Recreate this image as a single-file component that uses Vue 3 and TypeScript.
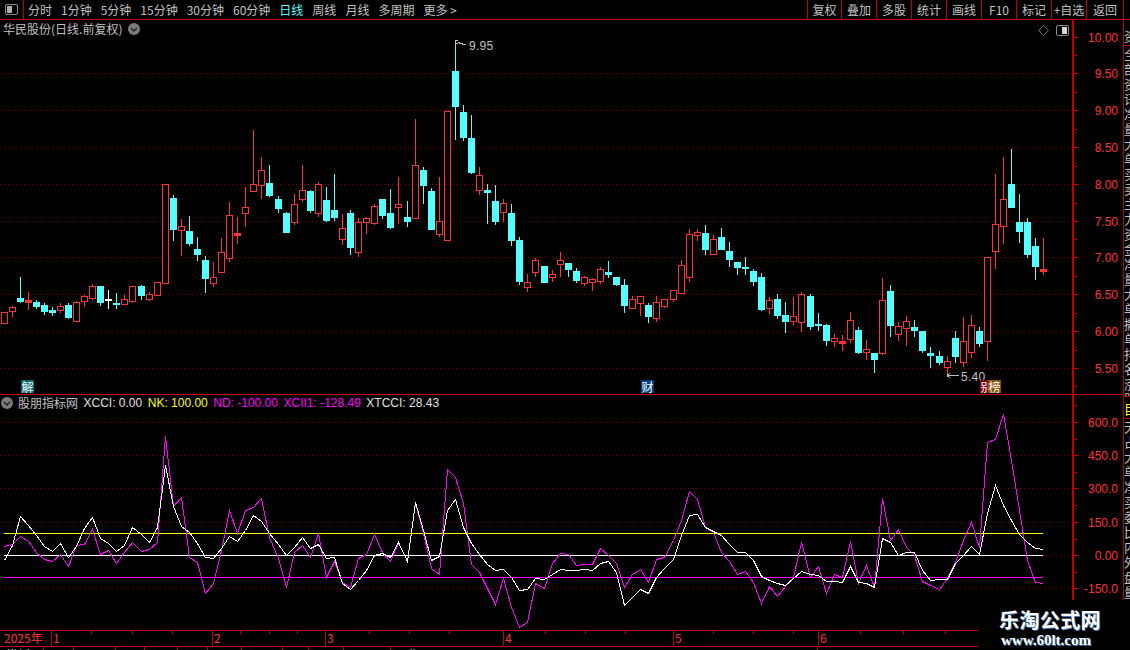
<script setup lang="ts">
type Candle = [string, number, number, number, number]

const navItems = ['分时', '1分钟', '5分钟', '15分钟', '30分钟', '60分钟', '日线', '周线', '月线', '多周期', '更多 >']
const toolItems = ['复权', '叠加', '多股', '统计', '画线', 'F10', '标记', '+自选', '返回']

// kind, high, body top, body bottom, low (in page pixels)
const raw: Candle[] = [
  ['r',312,312,323,323],['r',306,307,311,316],['c',277,298,301,302],['r',292,300,302,309],['c',300,302,306,308],
  ['c',303,305,311,314],['c',307,310,312,315],['r',303,306,310,312],['c',303,305,317,318],['r',301,302,321,321],
  ['r',295,296,301,306],['r',284,286,298,299],['c',286,286,302,305],['w',290,299,300,308],['c',293,303,304,308],
  ['r',295,299,304,304],['r',286,286,301,302],['c',285,286,295,299],['r',292,294,299,300],['r',282,282,295,295],
  ['r',184,184,283,283],['c',195,198,229,240],['r',219,226,230,255],['c',216,231,243,245],['c',237,249,254,260],
  ['c',256,260,278,292],['r',262,277,283,286],['r',238,252,272,272],['r',202,215,258,261],['r',217,233,235,243],
  ['r',187,207,213,226],['r',130,184,191,191],['r',157,170,185,198],['c',165,183,195,196],['c',196,199,208,212],
  ['c',212,213,232,232],['r',194,204,222,224],['r',165,190,199,201],['c',190,191,210,212],['r',182,184,213,216],
  ['c',187,200,220,221],['c',174,210,217,220],['r',214,228,239,244],['c',210,213,247,254],['r',218,222,252,256],
  ['r',217,218,222,233],['r',204,206,223,224],['c',199,199,215,218],['c',189,213,227,228],['r',177,204,207,223],
  ['c',201,217,221,226],['r',119,165,218,218],['c',167,170,185,203],['c',188,191,229,229],['r',177,221,234,236],
  ['r',111,111,240,240],['c',40,71,106,139],['c',105,112,137,140],['c',115,138,172,173],['r',167,175,190,194],
  ['c',184,190,192,223],['c',185,201,221,224],['r',199,203,212,221],['c',204,213,240,245],['c',237,240,281,284],
  ['r',274,282,287,291],['r',258,260,272,276],['c',266,266,282,282],['r',270,274,277,281],['r',252,260,264,276],
  ['c',263,263,269,276],['c',268,271,280,282],['r',276,277,283,285],['r',278,279,282,290],['r',267,269,281,283],
  ['c',261,272,274,277],['c',277,277,284,285],['c',279,285,305,312],['r',296,299,308,308],['r',296,296,303,315],
  ['c',303,305,316,322],['r',296,302,318,321],['r',299,299,306,307],['r',290,290,299,301],['r',260,265,293,293],
  ['r',229,234,277,281],['r',229,232,235,240],['c',225,233,249,254],['r',235,239,254,254],['c',228,237,249,249],
  ['c',242,251,259,266],['c',262,262,267,274],['c',257,267,268,274],['c',269,271,281,285],['c',273,277,309,310],
  ['r',297,300,308,313],['c',294,299,315,318],['c',302,315,321,332],['r',297,316,321,324],['r',292,294,322,331],
  ['c',294,296,326,329],['c',313,324,325,330],['c',324,325,340,345],['r',334,338,341,346],['r',335,341,343,350],
  ['r',312,320,339,342],['c',327,330,352,353],['r',340,349,352,359],['c',353,353,359,372],['r',278,300,353,354],
  ['c',285,291,325,336],['r',322,326,334,340],['r',316,321,328,345],['c',320,327,330,336],['c',331,331,350,352],
  ['c',347,353,355,367],['c',351,356,362,364],['r',356,361,367,375],['c',331,338,356,362],['r',317,341,362,366],
  ['r',315,325,352,357],['c',327,331,343,346],['r',257,257,341,360],['r',174,224,251,268],['r',157,199,226,243],
  ['c',149,184,207,207],['c',194,222,231,242],['c',218,222,254,257],['c',238,246,266,279],['r',238,269,271,274],
]

const candleX = (i: number) => Math.floor(4 + 8.0605 * i)

const candles = raw.map(([kind, hi, top, bot, lo], i) => {
  const x = candleX(i)
  const solid = kind !== 'r' || bot - top <= 2
  return {
    x,
    hi,
    lo,
    top,
    bot,
    solid,
    color: kind === 'r' ? '#ff3232' : kind === 'c' ? '#54ffff' : '#ffffff',
  }
})

const whiteZ = [
  480,435,349,375,405,438,454,430,472,437,385,352,415,428,453,435,382,403,425,380,195,318,378,397,430,
  472,475,444,408,423,390,345,363,400,433,465,440,412,445,432,475,472,548,567,540,510,465,460,472,427,
  483,305,390,480,467,330,298,380,428,462,492,510,508,530,570,568,535,538,522,508,509,510,508,511,490,
  483,515,615,590,567,578,530,505,478,405,345,342,382,393,405,432,456,456,480,527,540,550,555,535,514,
  522,526,543,543,547,498,545,550,560,415,425,465,455,455,510,541,538,537,490,465,438,463,340,256,315,
  360,403,425,443,448,
]
const magentaZ = [
  437,433,408,422,455,478,484,463,498,435,433,388,463,450,490,456,425,453,448,427,108,318,290,472,485,
  580,550,450,330,400,330,320,295,410,475,560,455,436,470,400,530,483,545,560,475,462,402,455,482,430,
  480,310,400,505,523,208,232,310,492,515,565,613,535,620,680,665,548,565,490,460,463,495,493,493,445,
  465,490,560,522,508,545,478,472,420,360,272,298,380,395,455,482,523,513,545,608,558,588,557,530,425,
  530,498,578,522,530,423,548,495,560,295,420,388,440,465,542,555,568,535,485,420,367,440,127,118,42,
  180,330,480,547,550,
]

const toLine = (z: number[]) =>
  z.map((v, i) => `${candleX(i)}.5,${Math.round(400 + v / 3)}.5`).join(' ')
const whiteLine = toLine(whiteZ)
const magentaLine = toLine(magentaZ)

const priceGrid = [73, 110, 147, 184, 221, 257, 294, 331, 368]
const indGrid = [422, 455, 488, 522, 555, 588]

const priceAxis = [
  { y: 37, label: '10.00' },
  { y: 73, label: '9.50' },
  { y: 110, label: '9.00' },
  { y: 147, label: '8.50' },
  { y: 184, label: '8.00' },
  { y: 221, label: '7.50' },
  { y: 257, label: '7.00' },
  { y: 294, label: '6.50' },
  { y: 331, label: '6.00' },
  { y: 368, label: '5.50' },
]
const priceMinor = [55, 92, 129, 166, 203, 239, 276, 313, 350, 386]
const indAxis = [
  { y: 422, label: '600.0' },
  { y: 455, label: '450.0' },
  { y: 488, label: '300.0' },
  { y: 522, label: '150.0' },
  { y: 555, label: '0.00' },
  { y: 588, label: '-150.0' },
]
const indMinor = [405, 439, 472, 505, 539, 572]

const months = [
  { x: 51, label: '1' },
  { x: 212, label: '2' },
  { x: 325, label: '3' },
  { x: 503, label: '4' },
  { x: 673, label: '5' },
  { x: 818, label: '6' },
]
const timeTicks = [91, 132, 172, 240, 269, 297, 369, 409, 449, 545, 585, 625, 713, 753, 793, 860, 903, 945]

const tabs = [
  { w: 44, label: '模板' }, { w: 30, label: '+' }, { w: 42, label: '' }, { w: 29, label: '' },
  { w: 33, label: '' }, { w: 30, label: '' }, { w: 34, label: '' }, { w: 41, label: '' },
  { w: 26, label: '' }, { w: 35, label: '' }, { w: 47, label: '' }, { w: 427, label: '周期' },
]

const stripTop = '全部资讯净量大单'
const stripMid = '买卖主力资金净量大单撒单排名涨跌幅度换手率量比振幅总手金额市盈率'
const stripBot = '天占大单净买委比内外盘量比资金涨跌换手总额振幅'
</script>

<template>
  <div class="app">
    <header class="topbar">
      <button class="panel-btn" type="button" aria-label="面板">
        <svg width="13" height="11" viewBox="0 0 13 11">
          <rect x="0.5" y="0.5" width="12" height="10" rx="1.5" fill="none" stroke="#8a8a8a" />
          <rect x="2" y="2" width="5" height="7" fill="#b0b0b0" />
        </svg>
      </button>
      <nav class="nav">
        <span v-for="item in navItems" :key="item" :class="{ active: item === '日线' }">{{ item }}</span>
      </nav>
      <div class="tools">
        <span v-for="item in toolItems" :key="item" class="tool">{{ item }}</span>
      </div>
    </header>

    <div class="body">
      <div class="charts">
        <section class="pane price">
          <svg class="plot" width="1072" height="374" viewBox="0 20 1072 374">
            <line
              v-for="y in priceGrid"
              :key="y"
              x1="0"
              x2="1072"
              :y1="y + 0.5"
              :y2="y + 0.5"
              class="dots"
            />
            <g v-for="c in candles" :key="c.x" shape-rendering="crispEdges">
              <rect :x="c.x" :y="c.hi" width="1" :height="c.lo - c.hi + 1" :fill="c.color" />
              <rect
                v-if="c.solid"
                :x="c.x - 3"
                :y="c.top"
                width="7"
                :height="c.bot - c.top + 1"
                :fill="c.color"
              />
              <rect
                v-else
                :x="c.x - 2.5"
                :y="c.top + 0.5"
                width="6"
                :height="c.bot - c.top"
                fill="#000"
                :stroke="c.color"
              />
            </g>
            <g shape-rendering="crispEdges" fill="none" stroke="#c0c0c0">
              <path d="M455.5 46V40.5H458M456 43.5H458" />
              <path d="M458 42.5L461 43.5L464 44.5H466" />
              <path d="M947 375.5H959M947 375.5L950 373M947 375.5L950 378" />
            </g>
            <text x="469" y="50" class="note">9.95</text>
            <text x="961" y="381" class="note">5.40</text>
          </svg>
          <svg class="axis" width="49" height="374" viewBox="1074 20 49 374">
            <g shape-rendering="crispEdges" fill="#c00000">
              <rect v-for="t in priceAxis" :key="t.y" x="1074" :y="t.y" width="5" height="1" />
              <rect v-for="y in priceMinor" :key="y" x="1074" :y="y" width="3" height="1" />
            </g>
            <text v-for="t in priceAxis" :key="t.label" x="1118" :y="t.y + 5" class="tick">{{ t.label }}</text>
          </svg>

          <div class="legend">
            <span class="name">华民股份(日线.前复权)</span>
            <svg class="chev" width="12" height="12" viewBox="0 0 12 12">
              <circle cx="6" cy="6" r="6" fill="#7a7a7a" />
              <path d="M3 5L6 8L9 5" fill="none" stroke="#1c1c1c" stroke-width="1.3" />
            </svg>
          </div>
          <div class="corner">
            <svg width="11" height="11" viewBox="0 0 11 11">
              <path d="M5.5 .5L10.5 5.5L5.5 10.5L.5 5.5Z" fill="none" stroke="#6e6e6e" />
            </svg>
            <svg width="13" height="11" viewBox="0 0 13 11">
              <rect x="0.5" y="0.5" width="12" height="10" rx="1.5" fill="none" stroke="#8a8a8a" />
              <rect x="6" y="2" width="5" height="7" fill="#d8d8d8" />
            </svg>
          </div>
          <span class="badge teal">解</span>
          <span class="badge blue">财</span>
          <span class="badge crimson">别</span>
          <span class="badge brown">榜</span>
        </section>

        <section class="pane indicator">
          <svg class="plot" width="1072" height="235" viewBox="0 395 1072 235">
            <line
              v-for="y in indGrid"
              :key="y"
              x1="0"
              x2="1072"
              :y1="y + 0.5"
              :y2="y + 0.5"
              class="dots"
            />
            <g shape-rendering="crispEdges">
              <rect x="4" y="533" width="1039" height="1" fill="#ffff00" />
              <rect x="4" y="555" width="1039" height="1" fill="#ffffff" />
              <rect x="4" y="577" width="1039" height="1" fill="#ff00ff" />
            </g>
            <polyline :points="magentaLine" fill="none" stroke="#ff00ff" shape-rendering="crispEdges" />
            <polyline :points="whiteLine" fill="none" stroke="#ffffff" shape-rendering="crispEdges" />
          </svg>
          <svg class="axis" width="49" height="235" viewBox="1074 395 49 235">
            <g shape-rendering="crispEdges" fill="#c00000">
              <rect v-for="t in indAxis" :key="t.y" x="1074" :y="t.y" width="5" height="1" />
              <rect v-for="y in indMinor" :key="y" x="1074" :y="y" width="3" height="1" />
            </g>
            <text v-for="t in indAxis" :key="t.label" x="1118" :y="t.y + 5" class="tick">{{ t.label }}</text>
          </svg>

          <div class="legend ind-legend">
            <svg class="chev first" width="12" height="12" viewBox="0 0 12 12">
              <circle cx="6" cy="6" r="6" fill="#7a7a7a" />
              <path d="M3 5L6 8L9 5" fill="none" stroke="#1c1c1c" stroke-width="1.3" />
            </svg>
            <span class="name">股朋指标网</span>
            <span class="val white">XCCI: 0.00</span>
            <span class="val yellow">NK: 100.00</span>
            <span class="val magenta">ND: -100.00</span>
            <span class="val magenta">XCII1: -128.49</span>
            <span class="val white">XTCCI: 28.43</span>
          </div>
        </section>
      </div>

      <aside class="strip">
        <div class="strip-cell top"><p>资金</p></div>
        <div class="strip-cell mid"><p>{{ stripTop }}{{ stripMid }}</p></div>
        <div class="strip-cell tab"><p>目</p></div>
        <div class="strip-cell rest"><p>{{ stripBot }}{{ stripBot }}</p></div>
      </aside>
    </div>

    <svg class="time" width="1130" height="17" viewBox="0 630 1130 17" shape-rendering="crispEdges">
      <rect x="0" y="630" width="1130" height="1" fill="#c00000" />
      <rect x="0" y="646" width="1130" height="1" fill="#c00000" />
      <rect v-for="m in months" :key="m.x" :x="m.x" y="631" width="1" height="15" fill="#c00000" />
      <rect v-for="x in timeTicks" :key="x" :x="x" y="631" width="1" height="3" fill="#c00000" />
      <text x="4" y="643" class="time-text" shape-rendering="auto">2025年</text>
      <text v-for="m in months" :key="m.label" :x="m.x + 2" y="643" class="time-text">{{ m.label }}</text>
    </svg>

    <div class="tabs">
      <span v-for="(t, i) in tabs" :key="i" class="tabcell" :style="{ width: t.w + 'px' }">{{ t.label }}</span>
    </div>

    <aside class="watermark">
      <strong class="wm-title">乐淘公式网</strong>
      <span class="wm-url">www.60lt.com</span>
    </aside>
  </div>
</template>

<style>
html,
body {
  margin: 0;
  background: #000;
}
</style>

<style scoped>
.app {
  position: relative;
  width: 1130px;
  height: 650px;
  overflow: hidden;
  background: #000;
  display: flex;
  flex-direction: column;
  color: #c0c0c0;
  font-family: "Noto Sans CJK SC", "Liberation Sans", sans-serif;
  font-size: 12px;
}

.topbar {
  flex: none;
  display: flex;
  align-items: stretch;
  height: 19px;
  border-bottom: 1px solid #c00000;
}
.panel-btn {
  flex: none;
  box-sizing: border-box;
  width: 24px;
  padding: 0 0 1px 0;
  margin: 0;
  background: none;
  border: 0;
  border-right: 1px solid #c00000;
  display: flex;
  align-items: center;
  justify-content: center;
}
.nav {
  flex: 1;
  display: flex;
  align-items: center;
  gap: 9px;
  padding-left: 4px;
  line-height: 19px;
  white-space: nowrap;
}
.nav .active {
  color: #54ffff;
}
.tools {
  flex: none;
  display: flex;
  margin-right: 6px;
  border-right: 1px solid #c00000;
}
.tool {
  box-sizing: border-box;
  width: 35px;
  border-left: 1px solid #c00000;
  text-align: center;
  line-height: 19px;
  white-space: nowrap;
}
.tool:first-child {
  width: 34px;
}
.tool:last-child {
  width: 37px;
}

.body {
  flex: none;
  display: flex;
  height: 610px;
}
.charts {
  flex: none;
  width: 1123px;
  border-right: 1px solid #c00000;
  display: flex;
  flex-direction: column;
}
.pane {
  position: relative;
  display: flex;
}
.price {
  height: 374px;
  border-bottom: 1px solid #c00000;
}
.indicator {
  height: 235px;
}
.plot {
  display: block;
  flex: none;
}
.axis {
  display: block;
  flex: none;
  border-left: 2px solid #c00000;
}
.dots {
  stroke: #8c0000;
  stroke-width: 1;
  stroke-dasharray: 1 3;
  shape-rendering: crispEdges;
}
.note {
  fill: #c0c0c0;
  font-family: "Liberation Sans", sans-serif;
  font-size: 12px;
  letter-spacing: 0.3px;
}
.tick {
  fill: #ff3232;
  text-anchor: end;
  font-family: "Liberation Sans", sans-serif;
  font-size: 12px;
}

.legend {
  position: absolute;
  left: 3px;
  top: 0;
  height: 18px;
  display: flex;
  align-items: center;
  white-space: nowrap;
}
.legend .name {
  line-height: 18px;
}
.chev {
  margin-left: 6px;
}
.chev.first {
  margin-left: -2px;
  margin-right: 5px;
}
.ind-legend {
  height: 15px;
}
.val {
  margin-left: 5.5px;
  font-family: "Liberation Sans", sans-serif;
}
.white {
  color: #e0e0e0;
}
.yellow {
  color: #ffff00;
}
.magenta {
  color: #ff00ff;
}

.corner {
  position: absolute;
  right: 54px;
  top: 5px;
  display: flex;
  align-items: center;
  gap: 7px;
}

.badge {
  position: absolute;
  top: 360px;
  width: 13px;
  height: 13px;
  line-height: 13px;
  font-size: 12px;
  text-align: center;
  color: #fff;
}
.teal {
  left: 21px;
  background: #006a72;
}
.blue {
  left: 641px;
  background: #00407c;
}
.crimson {
  left: 980px;
  background: #8a0000;
}
.brown {
  left: 988px;
  background: #8a5200;
}

.strip {
  flex: none;
  width: 6px;
  overflow: hidden;
  display: flex;
  flex-direction: column;
}
.strip-cell {
  overflow: hidden;
  flex: none;
}
.strip-cell p {
  margin: 0;
  width: 14px;
  font-size: 13px;
  line-height: 15px;
  word-break: break-all;
}
.strip-cell.top {
  height: 25px;
  border-bottom: 1px solid #c00000;
}
.strip-cell.top p {
  padding-top: 8px;
}
.strip-cell.mid {
  height: 350px;
  border-bottom: 1px solid #c00000;
}
.strip-cell.tab {
  height: 20px;
  margin-top: 1px;
  border-bottom: 1px solid #c00000;
  color: #ffff00;
}
.strip-cell.tab p {
  padding-top: 3px;
}
.strip-cell.rest {
  height: 190px;
}

.time {
  display: block;
  flex: none;
}
.time-text {
  fill: #ff3232;
  font-family: "Noto Sans CJK SC", "Liberation Sans", sans-serif;
  font-size: 12px;
}

.tabs {
  flex: 1;
  display: flex;
  overflow: hidden;
}
.tabcell {
  box-sizing: border-box;
  flex: none;
  height: 3px;
  border-right: 1px solid #c00000;
  line-height: 16px;
  padding-left: 6px;
  color: #d0d0d0;
  white-space: nowrap;
}

.watermark {
  position: absolute;
  left: 978px;
  top: 600px;
  width: 152px;
  height: 50px;
  background: #000;
  display: flex;
  flex-direction: column;
  align-items: flex-start;
  padding-left: 21px;
  box-sizing: border-box;
}
.wm-title {
  margin-top: 8px;
  font-size: 20px;
  line-height: 24px;
  letter-spacing: 0.4px;
  font-weight: 700;
  color: #ffffff;
  text-shadow: 1px 1px 0 #3f78b8;
}
.wm-url {
  margin-left: 2px;
  font-family: "Liberation Serif", serif;
  font-size: 15px;
  line-height: 16px;
  font-weight: 700;
  color: #ffffff;
  text-shadow: 1px 1px 0 #3f78b8;
}
</style>
